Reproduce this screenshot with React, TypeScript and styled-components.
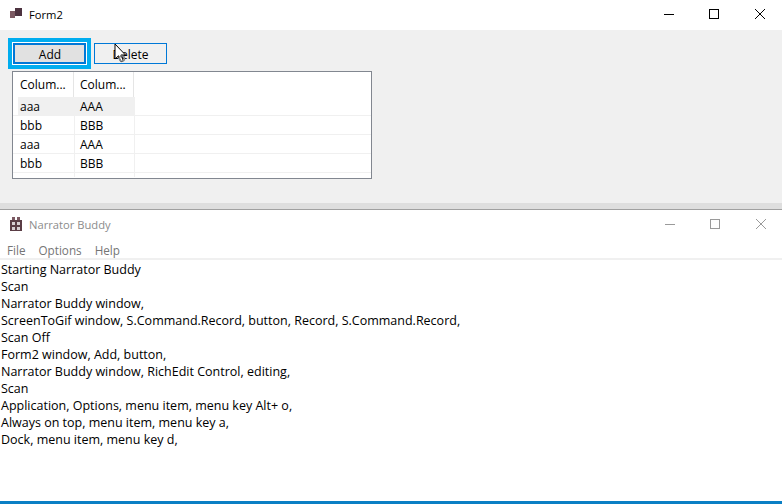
import React from "react";
import styled, { createGlobalStyle } from "styled-components";

const Global = createGlobalStyle`
  html, body { margin: 0; padding: 0; background: #fff; }
  body { font-family: "Open Sans", "Noto Sans", "Liberation Sans", sans-serif; font-size: 12px; color: #000; }
`;

const Page = styled.div`
  position: relative;
  width: 782px;
  height: 504px;
  overflow: hidden;
  display: flex;
  flex-direction: column;
  background: #fff;
`;

const TitleBar = styled.div`
  height: 30px;
  flex: none;
  box-sizing: border-box;
  display: flex;
  align-items: center;
  padding: 0 0 2px 10px;
  background: #fff;
`;

const TitleText = styled.span<{ $dim?: boolean }>`
  margin-left: 7px;
  font-size: 11.2px;
  color: ${(p) => (p.$dim ? "#8c8c8c" : "#000")};
`;

const WinButtons = styled.div<{ $shift?: boolean }>`
  margin-left: auto;
  margin-right: ${(p) => (p.$shift ? "-1px" : "0")};
  display: flex;
`;

const WinButton = styled.div`
  width: 44px;
  height: 28px;
  display: flex;
  align-items: center;
  justify-content: center;

  &:nth-child(2) { margin-left: 1px; }
  &:nth-child(3) { margin-left: 2px; }
`;

const FormBody = styled.div`
  height: 173px;
  flex: none;
  background: #f0f0f0;
  padding: 8px 0 0 8px;
  box-sizing: border-box;
`;

const ButtonRow = styled.div`
  display: flex;
  align-items: center;
  height: 31px;
`;

const FocusRing = styled.div`
  width: 83px;
  height: 31px;
  box-sizing: border-box;
  border: 4px solid #00adef;
  background: #fff;
  padding: 1px;
`;

const AddButton = styled.div`
  height: 100%;
  box-sizing: border-box;
  border: 2px solid #0078d7;
  background: #e1e1e1;
  display: flex;
  align-items: center;
  justify-content: center;
  padding: 1px 0 0 1px;
  font-size: 12px;
`;

const DeleteButton = styled.div`
  width: 73px;
  height: 21px;
  margin-left: 3px;
  box-sizing: border-box;
  border: 1px solid #0078d7;
  background: #f0f0f0;
  display: flex;
  align-items: center;
  justify-content: center;
  padding-top: 1px;
  font-size: 12px;
`;

const Grid = styled.div`
  width: 360px;
  height: 108px;
  margin: 2px 0 0 4px;
  box-sizing: border-box;
  border: 1px solid #828790;
  background: #fff;
  overflow: hidden;
`;

const HeaderRow = styled.div`
  height: 25px;
  display: flex;
`;

const HeaderCell = styled.div<{ $first?: boolean }>`
  width: ${(p) => (p.$first ? 61 : 60)}px;
  box-sizing: border-box;
  border-right: 1px solid #e5e5e5;
  padding: 5px 0 0 ${(p) => (p.$first ? 7 : 6)}px;
  font-size: 12px;
  line-height: 16px;
`;

const Row = styled.div`
  height: 19px;
  box-sizing: border-box;
  display: flex;
  border-bottom: 1px solid #f0f0f0;
  padding-left: 5px;
`;

const Cell = styled.div<{ $selected?: boolean; $first?: boolean }>`
  width: ${(p) => (p.$first ? 57 : 60)}px;
  box-sizing: border-box;
  border-right: 1px solid #f0f0f0;
  padding-left: ${(p) => (p.$first ? 2 : 5)}px;
  background: ${(p) => (p.$selected ? "#f0f0f0" : "transparent")};
  font-size: 12px;
  line-height: 20px;
`;

const Filler = styled.div`
  height: 4px;
  display: flex;
  padding-left: 5px;
`;

const FillerCell = styled.div<{ $first?: boolean }>`
  width: ${(p) => (p.$first ? 57 : 60)}px;
  box-sizing: border-box;
  border-right: 1px solid #f0f0f0;
`;

const Shadow = styled.div`
  height: 7px;
  flex: none;
  box-sizing: border-box;
  background: #dedede;
  border-bottom: 1px solid #a0a0a0;
`;

const MenuBar = styled.div`
  height: 20px;
  flex: none;
  box-sizing: border-box;
  display: flex;
  gap: 13px;
  padding: 0 0 0 7px;
  border-bottom: 2px solid #f0f0f0;
  color: #757575;
  font-size: 11.7px;
  line-height: 20px;
`;

const Log = styled.div`
  flex: 1;
  padding-top: 1px;
`;

const LogLine = styled.div`
  height: 17px;
  line-height: 17px;
  padding-left: 1px;
  font-size: 12.5px;
  white-space: nowrap;
`;

const BottomEdge = styled.div`
  height: 3px;
  flex: none;
  background: #0a7fc4;
`;

const Cursor = styled.svg`
  position: absolute;
  left: 114px;
  top: 43px;
`;

const logLines = [
  "Starting Narrator Buddy",
  "Scan",
  "Narrator Buddy window,",
  "ScreenToGif window, S.Command.Record, button, Record, S.Command.Record,",
  "Scan Off",
  "Form2 window, Add, button,",
  "Narrator Buddy window, RichEdit Control, editing,",
  "Scan",
  "Application, Options, menu item, menu key Alt+ o,",
  "Always on top, menu item, menu key a,",
  "Dock, menu item, menu key d,",
];

const rows = [
  ["aaa", "AAA"],
  ["bbb", "BBB"],
  ["aaa", "AAA"],
  ["bbb", "BBB"],
];

const Controls = ({ color, shift }: { color: string; shift?: boolean }) => (
  <WinButtons $shift={shift}>
    <WinButton>
      <svg width="12" height="12" shapeRendering="crispEdges"><path d="M1 6.5h10" stroke={color} fill="none" /></svg>
    </WinButton>
    <WinButton>
      <svg width="12" height="12" shapeRendering="crispEdges"><rect x="1.5" y="1.5" width="9" height="9" stroke={color} fill="none" /></svg>
    </WinButton>
    <WinButton>
      <svg width="12" height="12"><path d="M1 1l10 10M11 1L1 11" stroke={color} fill="none" /></svg>
    </WinButton>
  </WinButtons>
);

export default function App() {
  return (
    <Page>
      <Global />
      <TitleBar>
        <svg width="12" height="12" viewBox="0 0 12 12" shapeRendering="crispEdges">
          <rect x="0" y="3" width="5" height="7" fill="#7c5a63" />
          <rect x="5" y="0" width="7" height="8" fill="#4d3340" />
        </svg>
        <TitleText>Form2</TitleText>
        <Controls color="#000" />
      </TitleBar>
      <FormBody>
        <ButtonRow>
          <FocusRing>
            <AddButton>Add</AddButton>
          </FocusRing>
          <DeleteButton>Delete</DeleteButton>
        </ButtonRow>
        <Grid>
          <HeaderRow>
            <HeaderCell $first>Colum...</HeaderCell>
            <HeaderCell>Colum...</HeaderCell>
          </HeaderRow>
          {rows.map((r, i) => (
            <Row key={i}>
              <Cell $first $selected={i === 0}>{r[0]}</Cell>
              <Cell $selected={i === 0}>{r[1]}</Cell>
            </Row>
          ))}
          <Filler>
            <FillerCell $first />
            <FillerCell />
          </Filler>
        </Grid>
      </FormBody>
      <Shadow />
      <TitleBar>
        <svg width="12" height="14" viewBox="0 0 12 14" shapeRendering="crispEdges">
          <path d="M0 3h12v11H0z" fill="#5a3d45" />
          <path d="M2 0h3v3H2zM7 0h3v3H7z" fill="#7c5a63" />
          <path d="M2 5h3v3H2zM7 5h3v3H7zM2 10h3v3H2zM7 10h3v3H7z" fill="#d8cfd2" />
        </svg>
        <TitleText $dim>Narrator Buddy</TitleText>
        <Controls color="#9a9a9a" shift />
      </TitleBar>
      <MenuBar>
        <span>File</span>
        <span>Options</span>
        <span>Help</span>
      </MenuBar>
      <Log>
        {logLines.map((l, i) => (
          <LogLine key={i}>{l}</LogLine>
        ))}
      </Log>
      <BottomEdge />
      <Cursor width="14" height="22" viewBox="0 0 14 22">
        <path d="M1 1v15l3.5-3.2 2.5 6 2.4-1-2.5-5.8H11.5z" fill="#fff" stroke="#000" />
        <circle cx="8" cy="15.5" r="2.6" fill="none" stroke="#888" strokeWidth="1.4" />
      </Cursor>
    </Page>
  );
}
